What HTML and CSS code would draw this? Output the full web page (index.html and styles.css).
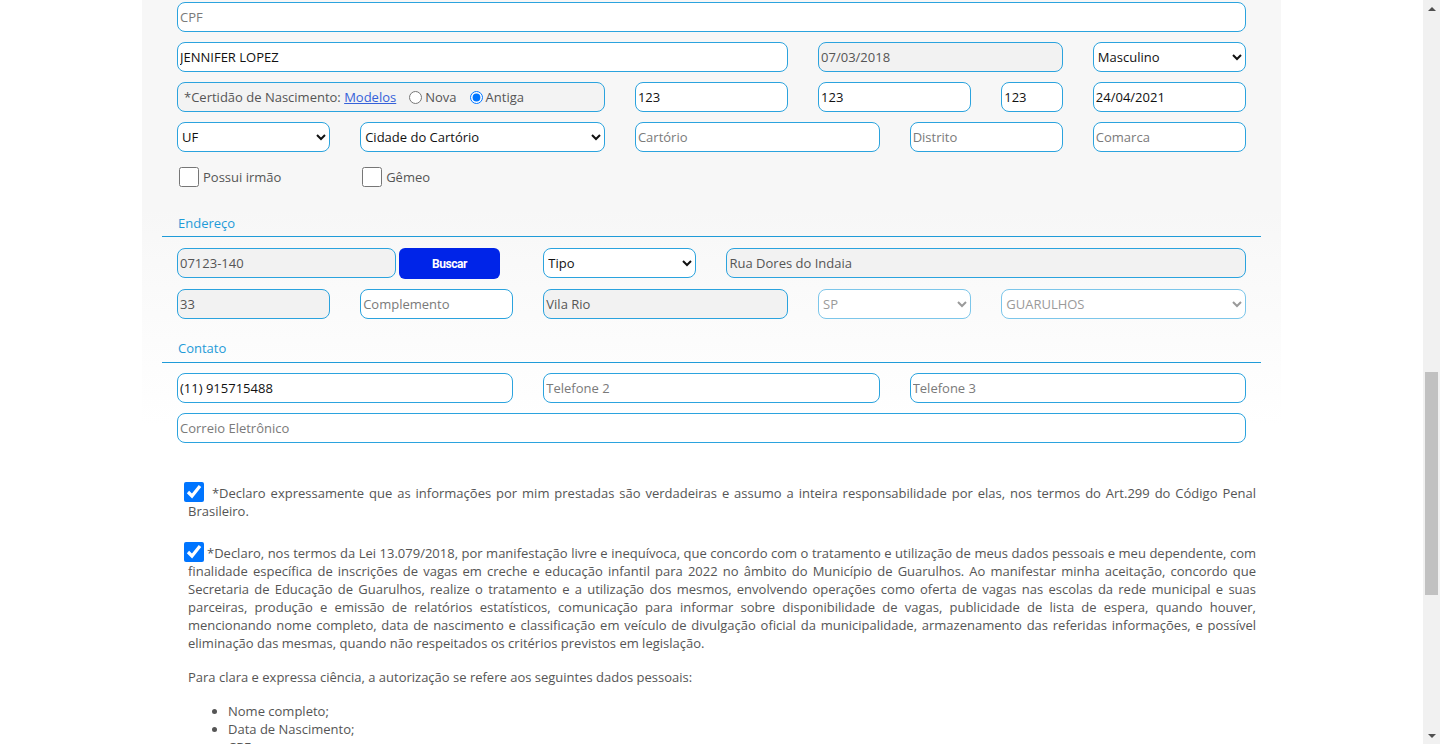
FILE: index.html
```html
<!DOCTYPE html>
<html lang="pt-BR">
<head>
<meta charset="utf-8">
<title>Inscrição</title>
<link rel="stylesheet" href="styles.css">
</head>
<body>
<div class="window">
  <main class="page">
    <div class="container">
      <section class="panel">
        <div class="grid">
          <input class="field span-12" type="text" placeholder="CPF">
          <input class="field span-7 dark" type="text" value="JENNIFER LOPEZ">
          <input class="field span-3 locked" type="text" value="07/03/2018" disabled>
          <select class="field select span-2"><option>Masculino</option></select>

          <div class="field cert span-5">
            <span>*Certidão de Nascimento: <a href="#" class="link">Modelos</a></span>
            <label class="radio"><input type="radio" name="cert">Nova</label>
            <label class="radio"><input type="radio" name="cert" checked>Antiga</label>
          </div>
          <input class="field span-2 dark" type="text" value="123">
          <input class="field span-2 dark" type="text" value="123">
          <input class="field span-1 dark" type="text" value="123">
          <input class="field span-2 dark" type="text" value="24/04/2021">

          <select class="field select span-2"><option>UF</option></select>
          <select class="field select span-3"><option>Cidade do Cartório</option></select>
          <input class="field span-3" type="text" placeholder="Cartório">
          <input class="field span-2" type="text" placeholder="Distrito">
          <input class="field span-2" type="text" placeholder="Comarca">
        </div>

        <div class="grid check-row">
          <label class="check span-2"><input type="checkbox">Possui irmão</label>
          <label class="check span-2"><input type="checkbox">Gêmeo</label>
        </div>

        <h3 class="section-title first">Endereço</h3>
        <div class="grid">
          <div class="cep span-4">
            <input class="field locked cep-input" type="text" value="07123-140" disabled>
            <button class="btn-search" type="button">Buscar</button>
          </div>
          <select class="field select span-2"><option>Tipo</option></select>
          <input class="field span-6 locked" type="text" value="Rua Dores do Indaia" disabled>

          <input class="field span-2 locked" type="text" value="33" disabled>
          <input class="field span-2" type="text" placeholder="Complemento">
          <input class="field span-3 locked" type="text" value="Vila Rio" disabled>
          <select class="field select span-2 off" disabled><option>SP</option></select>
          <select class="field select span-3 off" disabled><option>GUARULHOS</option></select>
        </div>

        <h3 class="section-title second">Contato</h3>
        <div class="grid">
          <input class="field span-4 dark" type="text" value="(11) 915715488">
          <input class="field span-4" type="text" placeholder="Telefone 2">
          <input class="field span-4" type="text" placeholder="Telefone 3">
          <input class="field span-12" type="text" placeholder="Correio Eletrônico">
        </div>
      </section>

      <section class="terms">
        <p class="term first-term"><input type="checkbox" class="tick" checked> *Declaro expressamente que as informações por mim prestadas são verdadeiras e assumo a inteira responsabilidade por elas, nos termos do Art.299 do Código Penal Brasileiro.</p>
        <p class="term second-term"><input type="checkbox" class="tick" checked>*Declaro, nos termos da Lei 13.079/2018, por manifestação livre e inequívoca, que concordo com o tratamento e utilização de meus dados pessoais e meu dependente, com finalidade específica de inscrições de vagas em creche e educação infantil para 2022 no âmbito do Município de Guarulhos. Ao manifestar minha aceitação, concordo que Secretaria de Educação de Guarulhos, realize o tratamento e a utilização dos mesmos, envolvendo operações como oferta de vagas nas escolas da rede municipal e suas parceiras, produção e emissão de relatórios estatísticos, comunicação para informar sobre disponibilidade de vagas, publicidade de lista de espera, quando houver, mencionando nome completo, data de nascimento e classificação em veículo de divulgação oficial da municipalidade, armazenamento das referidas informações, e possível eliminação das mesmas, quando não respeitados os critérios previstos em legislação.</p>
        <p class="term intro">Para clara e expressa ciência, a autorização se refere aos seguintes dados pessoais:</p>
        <ul class="data-list">
          <li>Nome completo;</li>
          <li>Data de Nascimento;</li>
          <li>CPF;</li>
        </ul>
      </section>
    </div>
  </main>
  <div class="scrollbar">
    <div class="sb-btn"><span class="arrow up"></span></div>
    <div class="sb-track"><div class="sb-thumb"></div></div>
    <div class="sb-btn"><span class="arrow down"></span></div>
  </div>
</div>
</body>
</html>
```
FILE: styles.css
```css
* { box-sizing: border-box; }

html, body {
  margin: 0;
  height: 100%;
  overflow: hidden;
}

body {
  font-family: "Open Sans", "Liberation Sans", sans-serif;
  font-size: 13px;
  color: #555;
  background: #fff;
}

.window {
  display: flex;
  height: 744px;
}

.page {
  flex: 1;
  overflow: hidden;
  background: #fff;
}

.container {
  width: 1139px;
  margin: 0 auto;
}

.panel {
  padding: 2px 20px 12px;
  background: linear-gradient(to bottom, #f7f7f7 0px, #f7f7f7 210px, #fcfcfc 340px, #ffffff 425px);
}

.grid {
  display: grid;
  grid-template-columns: repeat(12, 1fr);
  column-gap: 30px;
  row-gap: 10px;
  padding: 0 15px;
}

.span-1 { grid-column: span 1; }
.span-2 { grid-column: span 2; }
.span-3 { grid-column: span 3; }
.span-4 { grid-column: span 4; }
.span-5 { grid-column: span 5; }
.span-6 { grid-column: span 6; }
.span-7 { grid-column: span 7; }
.span-12 { grid-column: span 12; }

.field {
  height: 30px;
  width: 100%;
  min-width: 0;
  margin: 0;
  padding: 1px 2px;
  border: 1px solid #2ba3de;
  border-radius: 8px;
  background: #fff;
  font-family: "Open Sans", "Liberation Sans", sans-serif;
  font-size: 13px;
  color: #555;
  outline: none;
}

.field::placeholder { color: #7a7a7a; }

.field.dark { color: #111; }

.field.locked {
  background: #f2f2f2;
  color: #555;
  -webkit-text-fill-color: #555;
  opacity: 1;
}

.select {
  padding: 1px 0;
  color: #111;
}

.select.off {
  color: #9a9a9a;
  border-color: #7cc6ea;
  background: #fff;
  opacity: 1;
}

.cert {
  display: flex;
  align-items: center;
  gap: 12px;
  padding: 0 6px;
  background: #f3f3f3;
  color: #555;
  white-space: nowrap;
}

.link {
  color: #3561d9;
  text-decoration: underline;
}

.radio {
  display: inline-flex;
  align-items: center;
  gap: 3px;
  margin-left: 1px;
}

.radio input {
  margin: 0;
  width: 13px;
  height: 13px;
}

.check-row {
  margin-top: 15px;
  height: 20px;
}

.check {
  display: flex;
  align-items: center;
  gap: 4px;
  color: #555;
}

.check input {
  width: 20px;
  height: 20px;
  margin: 0 0 0 2px;
}

.section-title {
  margin: 10px 0 11px;
  padding: 0 0 4px 16px;
  border-bottom: 1px solid #1f9bd8;
  font-size: 13px;
  font-weight: 400;
  line-height: 18px;
  color: #1f9bd8;
}

.section-title.first { margin-top: 27px; }
.section-title.second { margin-top: 20px; margin-bottom: 10px; padding-bottom: 5px; }

.cep {
  display: flex;
  align-items: flex-start;
  gap: 3px;
  height: 31px;
}

.cep-input {
  width: 219px;
  flex: none;
}

.btn-search {
  width: 101px;
  height: 31px;
  border: none;
  border-radius: 6px;
  background: #0024e8;
  color: #fff;
  font-family: "Roboto", "Liberation Sans", sans-serif;
  font-weight: 700;
  font-size: 12px;
  letter-spacing: -0.4px;
  padding: 0;
}

.terms {
  padding: 29px 25px 0 46px;
}

.term {
  margin: 0;
  line-height: 18px;
  text-align: justify;
  color: #555;
}

.first-term { margin-bottom: 24px; }
.second-term { margin-bottom: 16px; }
.intro { margin-bottom: 16px; }

.tick {
  width: 20px;
  height: 20px;
  margin: -6px 3px 0 -4px;
  vertical-align: middle;
}

.data-list {
  margin: 0;
  padding-left: 40px;
  line-height: 18px;
  color: #555;
}

.scrollbar {
  width: 17px;
  flex: none;
  display: flex;
  flex-direction: column;
  background: #f1f1f1;
}

.sb-btn {
  height: 17px;
  display: flex;
  align-items: center;
  justify-content: center;
}

.arrow {
  width: 0;
  height: 0;
  border-left: 4px solid transparent;
  border-right: 4px solid transparent;
}

.arrow.up { border-bottom: 4px solid #505050; }
.arrow.down { border-top: 4px solid #505050; }

.sb-track {
  flex: 1;
  display: flex;
  flex-direction: column;
  padding: 355px 2px 0;
}

.sb-thumb {
  height: 223px;
  background: #c1c1c1;
}
```
